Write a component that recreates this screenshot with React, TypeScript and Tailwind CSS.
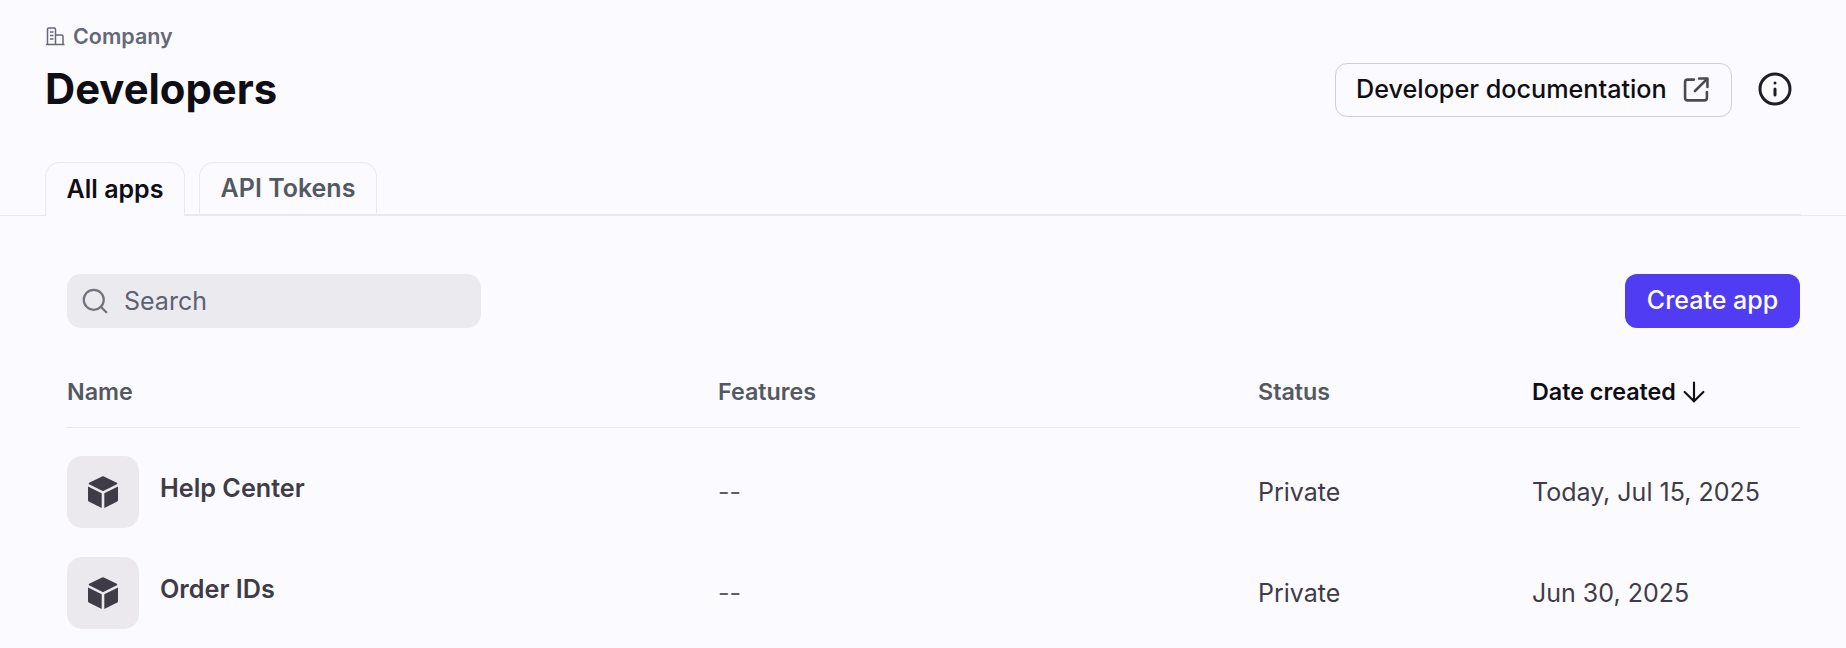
import { ArrowDown, Info, Search } from "lucide-react";

const font = { fontFamily: "Inter, 'Liberation Sans', sans-serif" };

function CompanyIcon() {
  return (
    <svg width="20" height="20" viewBox="0 0 20 20" fill="none" stroke="#646879" strokeWidth="1.5">
      <path d="M1 18.5h18.5" />
      <path d="M2.5 18.5V3.2c0-.7.5-1.2 1.2-1.2h5.6c.7 0 1.2.5 1.2 1.2v15.3" />
      <path d="M10.5 9h6.3c.7 0 1.2.5 1.2 1.2v8.3" />
      <path d="M5 6h3.5M5 9.5h3.5M5 13h3.5" strokeWidth="1.4" />
    </svg>
  );
}

function ExternalIcon() {
  return (
    <svg width="26" height="26" viewBox="0 0 25 25" fill="none" stroke="#4a4a52" strokeWidth="2.5" strokeLinecap="round" strokeLinejoin="round">
      <path d="M10.5 2.5H4.5a2.5 2.5 0 0 0-2.5 2.5v15a2.5 2.5 0 0 0 2.5 2.5h16a2.5 2.5 0 0 0 2.5-2.5v-5.5" />
      <path d="M15.5 1.5H23.5V9.5" />
      <path d="M23 2 11.5 13.5" />
    </svg>
  );
}

function CubeIcon() {
  return (
    <svg width="32" height="32" viewBox="0 0 32 32" fill="#3f3c47">
      <path d="M16 1 29.5 7.5 16 14.3 2.5 7.5Z" strokeLinejoin="round" stroke="#3f3c47" strokeWidth="1.6" />
      <path d="M1 10.5 14.7 17.2V32L2.2 25.7C1.5 25.3 1 24.6 1 23.7Z" />
      <path d="M31 10.5 17.3 17.2V32L29.8 25.7C30.5 25.3 31 24.6 31 23.7Z" />
    </svg>
  );
}

const gridCols = "grid grid-cols-[651px_540px_274px_1fr] items-center";

function Row({ name, date }: { name: string; date: string }) {
  return (
    <div className={`${gridCols} h-[101px]`}>
      <div className="flex items-center gap-[21px]">
        <div className="w-[72px] h-[72px] rounded-[15px] bg-[#ebe9ee] flex items-center justify-center">
          <CubeIcon />
        </div>
        <span className="text-[25.2px] font-semibold text-[#3f3c47] -mt-[6px]">{name}</span>
      </div>
      <div className="text-[25px] text-[#5f5e68] pt-[2px]">--</div>
      <div className="text-[25px] text-[#3f3c47] pt-[2px]">Private</div>
      <div className="text-[25px] text-[#3f3c47] whitespace-nowrap pt-[2px]">{date}</div>
    </div>
  );
}

export default function App() {
  return (
    <div style={font} className="w-[1846px] h-[648px] overflow-hidden bg-[#fbfaff]">
      <header className="flex items-start justify-between pl-[45px] pr-[53px] pt-[22px] h-[162px]">
        <div>
          <div className="flex items-center gap-[8px] h-[28px]">
            <CompanyIcon />
            <span className="text-[21.5px] font-semibold text-[#646879]">Company</span>
          </div>
          <h1 className="text-[41.8px] leading-[50px] font-bold text-[#0f0e14] mt-[14px]">Developers</h1>
        </div>
        <div className="flex items-center gap-[25px] mt-[41px]">
          <button className="h-[54px] w-[397px] rounded-[12px] border border-[#cfcdd6] flex items-center justify-between pl-[20px] pr-[22px]">
            <span className="text-[25.2px] font-medium text-[#0f0e14]">Developer documentation</span>
            <ExternalIcon />
          </button>
          <Info size={36} strokeWidth={2} className="text-[#1f1e26] -mt-[2px]" />
        </div>
      </header>

      <div className="border-b border-[#e9e8ee]">
        <div className="mx-[45px] border-b border-[#e9e8ee] flex gap-[14px] h-[53px]">
          <div className="w-[140px] h-[54px] rounded-t-[15px] border border-b-0 border-[#e9e8ee] bg-[#fbfaff] flex items-center justify-center text-[25px] font-semibold text-[#0f0e14]">
            All apps
          </div>
          <div className="w-[178px] h-[53px] rounded-t-[15px] border border-b-0 border-[#e9e8ee] flex items-center justify-center text-[25px] font-semibold text-[#545861]">
            API Tokens
          </div>
        </div>
      </div>

      <main className="pl-[67px] pr-[46px] pt-[58px]">
        <div className="flex items-center justify-between">
          <div className="w-[414px] h-[54px] rounded-[14px] bg-[#ebeaef] flex items-center pl-[13px] gap-[14px]">
            <Search size={30} strokeWidth={1.8} className="text-[#73737d]" />
            <span className="text-[25px] text-[#5f6170] pt-[2px]">Search</span>
          </div>
          <button className="w-[175px] h-[54px] rounded-[12px] bg-[#503cf2] text-white text-[25px] font-medium">Create app</button>
        </div>

        <div className={`${gridCols} h-[71px] mt-[29px] border-b border-[#e9e8ee] text-[23.3px] font-semibold text-[#545861]`}>
          <div>Name</div>
          <div>Features</div>
          <div>Status</div>
          <div className="flex items-center gap-[2px] text-[#0f0e14]">
            Date created <ArrowDown size={32} strokeWidth={1.6} />
          </div>
        </div>

        <div className="pt-[13px]">
          <Row name="Help Center" date="Today, Jul 15, 2025" />
          <Row name="Order IDs" date="Jun 30, 2025" />
        </div>
      </main>
    </div>
  );
}
